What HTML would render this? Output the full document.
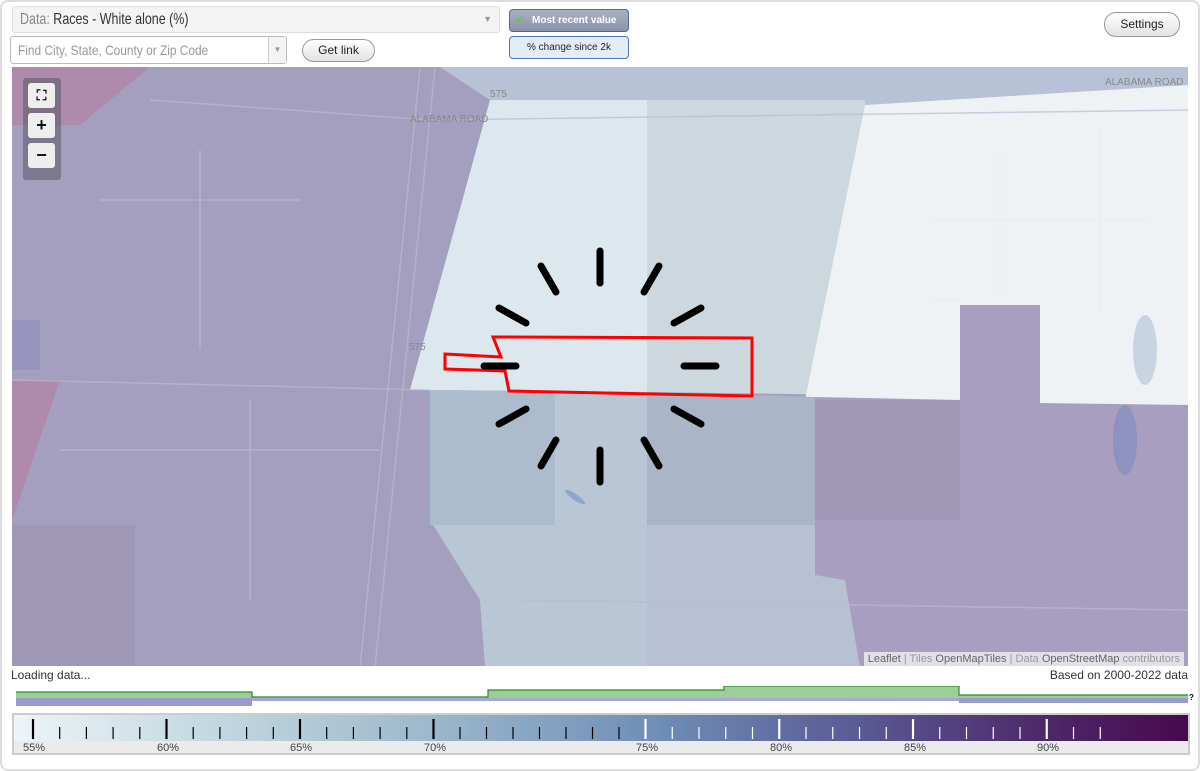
<!DOCTYPE html>
<html><head><meta charset="utf-8"><style>
*{box-sizing:border-box;margin:0;padding:0}
body{width:1200px;height:771px;background:#fff;font-family:"Liberation Sans",Arial,sans-serif;position:relative;overflow:hidden}
.frame{position:absolute;left:0;top:0;width:1200px;height:771px;border:2px solid #ddd;border-radius:8px}
.sel{position:absolute;left:12px;top:6px;width:488px;height:27px;background:#f4f4f4;border:1px solid #ddd;border-radius:3px;font-size:16px;line-height:25px;padding-left:7px;color:#333}
.sel .t{display:inline-block;transform:scaleX(0.78);transform-origin:left center;white-space:nowrap}
.sel .t span{color:#888}
.arr{position:absolute;right:7px;top:0;color:#999;font-size:9px}
.find{position:absolute;left:10px;top:36px;width:277px;height:28px;border:1px solid #bbb;border-radius:3px;background:#fff;font-size:14px;color:#999;line-height:26px;padding-left:7px}
.find .t{display:inline-block;transform:scaleX(0.85);transform-origin:left center;white-space:nowrap}
.find .dd{position:absolute;right:0;top:0;width:18px;height:26px;border-left:1px solid #ccc;background:#f4f4f4;color:#999;font-size:8px;text-align:center}
.btn{position:absolute;border:1px solid #999;border-radius:12px;background:linear-gradient(#fff,#e2e2e2);font-size:12px;text-align:center;color:#222}
.b1{position:absolute;left:509px;top:9px;width:120px;height:23px;border:1px solid #4b6b99;border-radius:4px;background:linear-gradient(#a9b0c4,#8b93ab);color:#fff;font-weight:bold;font-size:10px;line-height:21px;padding-left:22px}
.b2{position:absolute;left:509px;top:36px;width:120px;height:23px;border:1px solid #4b79b5;border-radius:4px;background:#e4ecf6;font-size:10px;line-height:21px;text-align:center;color:#223}
.map{position:absolute;left:12px;top:67px;width:1176px;height:599px;overflow:hidden;background:#a59fbf}
.zc{position:absolute;left:11px;top:11px;width:38px;height:102px;background:rgba(90,90,100,.55);border-radius:3px}
.zb{position:absolute;left:5px;width:27px;height:25px;background:#eee;border-radius:3px;text-align:center;font-weight:bold;font-size:18px;line-height:24px;color:#111}
.attr{position:absolute;right:4px;bottom:0;background:rgba(235,235,240,.85);font-size:11px;color:#999;padding:1px 4px}
.attr b{font-weight:normal;color:#666}
.legend{position:absolute;left:12px;top:713px;width:1178px;height:42px;border:2px solid #ccc;background:#ebebeb}
.grad{position:absolute;left:0;top:0;width:1174px;height:26px;background:linear-gradient(90deg,#eef4f7 0%,#c7dbe3 15%,#9db9cc 35%,#6f8db6 55%,#5a5a94 72%,#4e2d6e 86%,#48084e 100%)}
.lab{position:absolute;top:27px;font-size:11px;color:#444}
</style></head><body>
<div class="frame"></div>
<div class="sel"><span class="t"><span>Data:</span> Races - White alone (%)</span><span class="arr">▼</span></div>
<div class="find"><span class="t">Find City, State, County or Zip Code</span><div class="dd">▼</div></div>
<div class="btn" style="left:302px;top:39px;width:73px;height:23px;line-height:21px">Get link</div>
<div class="b1"><span style="position:absolute;left:5px;top:0;color:#6c3">✔</span>Most recent value</div>
<div class="b2">% change since 2k</div>
<div class="btn" style="left:1104px;top:12px;width:76px;height:25px;line-height:23px">Settings</div>

<div class="map">
<svg width="1176" height="599" viewBox="12 67 1176 599" style="position:absolute;left:0;top:0">
<rect x="12" y="67" width="1176" height="600" fill="#a59fbf"/>
<polygon points="12,67 150,67 80,125 12,125" fill="#ae8bad"/>
<polygon points="12,380 60,380 12,520" fill="#ae8aac"/>
<polygon points="12,320 40,320 40,370 12,370" fill="#8e8dbd" opacity=".6"/>
<rect x="12" y="525" width="123" height="142" fill="#9f97b6"/>
<polygon points="440,67 1188,67 1188,85 865,105 490,100" fill="#b8c2d7"/>
<polygon points="490,100 647,100 647,392 410,390" fill="#dde8ee"/>
<polygon points="647,100 865,100 865,395 647,392" fill="#ccd7de"/>
<polygon points="865,105 1188,85 1188,405 805,400 865,105" fill="#eff2f4"/>
<polygon points="430,390 647,392 647,667 485,667 480,600 430,520" fill="#b9c6d6"/>
<polygon points="430,390 555,391 555,525 430,525" fill="#adbccd"/>
<polygon points="647,392 815,397 815,525 647,525" fill="#aab5c8"/>
<polygon points="647,525 815,525 815,575 845,580 860,667 647,667" fill="#b7c1d3"/>
<polygon points="815,397 960,400 960,305 1040,305 1040,405 1188,405 1188,667 860,667 845,580 815,575" fill="#a89ebf"/>
<rect x="815" y="400" width="145" height="120" fill="#a198b8"/>
<g stroke="#bdb8d1" stroke-width="1.5" fill="none" opacity=".7">
<path d="M420,67 L360,667"/><path d="M435,67 L375,667"/>
<path d="M12,380 L430,390"/><path d="M150,100 L430,120 L1188,110"/>
<path d="M100,200 L300,200 M200,150 L200,350 M60,450 L380,450 M250,400 L250,600 M520,600 L1188,610"/>
</g>
<g stroke="#e9eef2" stroke-width="2" fill="none" opacity=".8">
<path d="M930,220 L1150,220 M1000,150 L1000,300 M1100,130 L1100,310 M930,300 L960,300"/>
</g>
<ellipse cx="1145" cy="350" rx="12" ry="35" fill="#c9d4e3"/>
<ellipse cx="1125" cy="440" rx="12" ry="35" fill="#8d92c0"/>
<ellipse cx="575" cy="497" rx="12" ry="3" fill="#8ea6c8" transform="rotate(35 575 497)"/>
<polygon points="445,354 501,357 493,337 752,338 752,396 509,391 505,371 445,369" fill="none" stroke="#f00" stroke-width="3"/>
<g stroke="#000" stroke-width="7" stroke-linecap="round">
<line x1="600" y1="251" x2="600" y2="283"/>
<line x1="600" y1="450" x2="600" y2="482"/>
<line x1="484" y1="366" x2="516" y2="366"/>
<line x1="684" y1="366" x2="716" y2="366"/>
<line x1="541" y1="266" x2="556" y2="292"/>
<line x1="659" y1="266" x2="644" y2="292"/>
<line x1="541" y1="466" x2="556" y2="440"/>
<line x1="659" y1="466" x2="644" y2="440"/>
<line x1="499" y1="308" x2="526" y2="323"/>
<line x1="701" y1="308" x2="674" y2="323"/>
<line x1="499" y1="424" x2="526" y2="409"/>
<line x1="701" y1="424" x2="674" y2="409"/>
</g>
<text x="410" y="122" font-size="10" fill="#888" font-family="Liberation Sans">ALABAMA ROAD</text>
<text x="1105" y="85" font-size="10" fill="#888" font-family="Liberation Sans">ALABAMA ROAD</text>
<text x="490" y="97" font-size="10" fill="#888" font-family="Liberation Sans">575</text>
<text x="409" y="350" font-size="10" fill="#888" font-family="Liberation Sans">575</text>
</svg>
<div class="zc">
<div class="zb" style="top:5px;font-size:14px">⛶</div>
<div class="zb" style="top:35px">+</div>
<div class="zb" style="top:65px">−</div>
</div>
<div class="attr"><b>Leaflet</b> | Tiles <b>OpenMapTiles</b> | Data <b>OpenStreetMap</b> contributors</div>
</div>

<div style="position:absolute;left:11px;top:668px;font-size:12px;color:#333">Loading data...</div>
<div style="position:absolute;right:12px;top:668px;font-size:12px;color:#333">Based on 2000-2022 data</div>

<svg width="1200" height="20" style="position:absolute;left:0;top:686px" viewBox="0 686 1200 20">
<path d="M16,692 L252,692 L252,697 L488,697 L488,690 L724,690 L724,686 L959,686 L959,695 L1188,695 L1188,701 L16,701 Z" fill="#9ccf98"/>
<path d="M16,692 L252,692 L252,697 L488,697 L488,690 L724,690 L724,686 L959,686 L959,695 L1188,695" fill="none" stroke="#2c8a2c" stroke-width="1.2"/>
<rect x="16" y="698" width="236" height="12" fill="#9c99cc"/>
<rect x="252" y="698" width="707" height="3" fill="#a9a6d6"/>
<rect x="959" y="698" width="229" height="5" fill="#9c99cc"/>
<text x="1189" y="700" font-size="8" font-weight="bold" font-family="Liberation Sans">?</text>
</svg>

<div class="legend">
<div class="grad"></div>
<svg width="1174" height="26" style="position:absolute;left:0;top:0">
<g stroke="#000" stroke-width="2.2">
<line x1="19" x2="19" y1="4" y2="24"/><line x1="152.5" x2="152.5" y1="4" y2="24"/><line x1="286" x2="286" y1="4" y2="24"/><line x1="419.5" x2="419.5" y1="4" y2="24"/>
</g>
<g stroke="#000" stroke-width="1.2">
<line x1="45.7" x2="45.7" y1="12" y2="24"/><line x1="72.4" x2="72.4" y1="12" y2="24"/><line x1="99.1" x2="99.1" y1="12" y2="24"/><line x1="125.8" x2="125.8" y1="12" y2="24"/>
<line x1="179.2" x2="179.2" y1="12" y2="24"/><line x1="205.9" x2="205.9" y1="12" y2="24"/><line x1="232.6" x2="232.6" y1="12" y2="24"/><line x1="259.3" x2="259.3" y1="12" y2="24"/>
<line x1="312.7" x2="312.7" y1="12" y2="24"/><line x1="339.4" x2="339.4" y1="12" y2="24"/><line x1="366.1" x2="366.1" y1="12" y2="24"/><line x1="392.8" x2="392.8" y1="12" y2="24"/>
<line x1="446" x2="446" y1="12" y2="24"/><line x1="472.5" x2="472.5" y1="12" y2="24"/><line x1="499" x2="499" y1="12" y2="24"/><line x1="525.5" x2="525.5" y1="12" y2="24"/>
<line x1="552" x2="552" y1="12" y2="24"/><line x1="578.5" x2="578.5" y1="12" y2="24"/><line x1="605" x2="605" y1="12" y2="24"/>
</g>
<g stroke="#fff" stroke-width="2.2">
<line x1="631.5" x2="631.5" y1="4" y2="24"/><line x1="765.25" x2="765.25" y1="4" y2="24"/><line x1="899" x2="899" y1="4" y2="24"/><line x1="1032.75" x2="1032.75" y1="4" y2="24"/>
</g>
<g stroke="#fff" stroke-width="1.2">
<line x1="658.25" x2="658.25" y1="12" y2="24"/><line x1="685" x2="685" y1="12" y2="24"/><line x1="711.75" x2="711.75" y1="12" y2="24"/><line x1="738.5" x2="738.5" y1="12" y2="24"/>
<line x1="792" x2="792" y1="12" y2="24"/><line x1="818.75" x2="818.75" y1="12" y2="24"/><line x1="845.5" x2="845.5" y1="12" y2="24"/><line x1="872.25" x2="872.25" y1="12" y2="24"/>
<line x1="925.75" x2="925.75" y1="12" y2="24"/><line x1="952.5" x2="952.5" y1="12" y2="24"/><line x1="979.25" x2="979.25" y1="12" y2="24"/><line x1="1006" x2="1006" y1="12" y2="24"/>
<line x1="1059.5" x2="1059.5" y1="12" y2="24"/><line x1="1086.25" x2="1086.25" y1="12" y2="24"/>
</g>
</svg>
<div class="lab" style="left:9px">55%</div>
<div class="lab" style="left:143px">60%</div>
<div class="lab" style="left:276px">65%</div>
<div class="lab" style="left:410px">70%</div>
<div class="lab" style="left:622px">75%</div>
<div class="lab" style="left:756px">80%</div>
<div class="lab" style="left:890px">85%</div>
<div class="lab" style="left:1023px">90%</div>
</div>
</body></html>
